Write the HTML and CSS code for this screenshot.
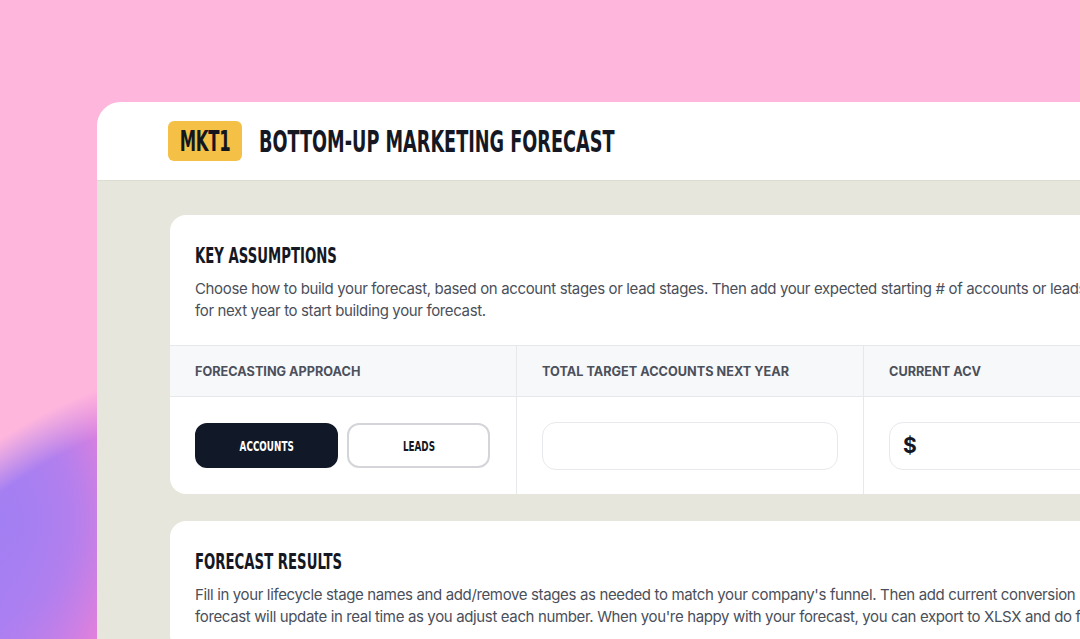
FILE: index.html
```html
<!DOCTYPE html>
<html lang="en">
<head>
<meta charset="utf-8">
<title>Bottom-up Marketing Forecast</title>
<link rel="stylesheet" href="styles.css">
</head>
<body>
<div class="window">
  <header class="topbar">
    <div class="logo"><span class="cond logo-text">MKT1</span></div>
    <h1 class="title"><span class="cond title-text">BOTTOM-UP MARKETING FORECAST</span></h1>
  </header>
  <main class="content">
    <section class="card">
      <div class="card-intro">
        <h2 class="card-title"><span class="cond heading-text">KEY ASSUMPTIONS</span></h2>
        <p class="card-text">Choose how to build your forecast, based on account stages or lead stages. Then add your expected starting # of accounts or leads<br>for next year to start building your forecast.</p>
      </div>
      <div class="grid">
        <div class="cell head">FORECASTING APPROACH</div>
        <div class="cell head">TOTAL TARGET ACCOUNTS NEXT YEAR</div>
        <div class="cell head">CURRENT ACV</div>
        <div class="cell body">
          <div class="toggle">
            <button class="btn active"><span class="cond btn-text">ACCOUNTS</span></button>
            <button class="btn"><span class="cond btn-text">LEADS</span></button>
          </div>
        </div>
        <div class="cell body"><div class="field"></div></div>
        <div class="cell body"><div class="field money"><span class="dollar">$</span></div></div>
      </div>
    </section>
    <section class="card">
      <div class="card-intro">
        <h2 class="card-title"><span class="cond heading-text">FORECAST RESULTS</span></h2>
        <p class="card-text">Fill in your lifecycle stage names and add/remove stages as needed to match your company's funnel. Then add current conversion rates. Your<br>forecast will update in real time as you adjust each number. When you're happy with your forecast, you can export to XLSX and do further analysis.</p>
      </div>
    </section>
  </main>
</div>
</body>
</html>
```
FILE: styles.css
```css
html, body {
  margin: 0;
  height: 100%;
  overflow: hidden;
}
body {
  width: 1080px;
  height: 639px;
  font-family: "Inter", "Liberation Sans", sans-serif;
  background:
    radial-gradient(circle 560px at 300px 900px, rgba(255,182,221,0) 0px, rgba(255,182,221,0) 505px, #ffb6dd 550px),
    radial-gradient(ellipse 140px 170px at 0px 520px, #a27ff3 0%, rgba(162,127,243,0.65) 55%, rgba(162,127,243,0) 100%),
    linear-gradient(90deg, #b67ff0 0px, #d07fe4 55px, #e680da 100px);
}
.window {
  margin: 102px 0 0 97px;
  width: 1100px;
  height: 700px;
  background: #e6e6dc;
  border-radius: 24px 0 0 0;
  overflow: hidden;
}
.cond {
  display: inline-block;
  font-family: "DejaVu Sans Condensed", "DejaVu Sans", sans-serif;
  font-weight: 700;
  white-space: nowrap;
}
.topbar {
  height: 78px;
  background: #ffffff;
  border-bottom: 1px solid #dcdcd3;
  display: flex;
  align-items: center;
  padding-left: 71px;
  gap: 17px;
}
.logo {
  width: 74px;
  height: 40px;
  background: #f5c046;
  border-radius: 6px;
  display: flex;
  align-items: center;
  justify-content: center;
  color: #14161f;
}
.logo-text {
  font-size: 29px;
  transform: scaleX(0.63);
  letter-spacing: -0.5px;
}
.title {
  margin: 0;
  color: #151823;
  font-weight: 700;
  line-height: 1;
}
.title-text {
  font-size: 30px;
  transform: scaleX(0.655);
  transform-origin: left center;
}
.content {
  padding: 34px 0 0 73px;
  display: flex;
  flex-direction: column;
  gap: 27px;
}
.card {
  background: #ffffff;
  border-radius: 16px 0 0 16px;
  width: 1000px;
  overflow: hidden;
}
.card-intro {
  padding: 27px 25px 23px;
}
.card-title {
  margin: 0 0 9px;
  color: #151823;
  line-height: 26px;
}
.heading-text {
  font-size: 22px;
  transform: scaleX(0.67);
  transform-origin: left center;
}
.card-text {
  margin: 0;
  font-size: 15px;
  line-height: 22px;
  color: #4a4f5a;
  white-space: nowrap;
  letter-spacing: -0.36px;
}
.grid {
  display: grid;
  grid-template-columns: 347px 347px 347px;
}
.cell {
  border-top: 1px solid #e6e8ec;
  border-right: 1px solid #e6e8ec;
  padding: 0 25px;
  display: flex;
  align-items: center;
}
.head {
  height: 50px;
  background: #f7f8fa;
  font-size: 12.7px;
  font-weight: 700;
  color: #4b505b;
}
.body {
  height: 97px;
}
.toggle {
  display: flex;
  gap: 9px;
}
.btn {
  width: 143px;
  height: 45px;
  border-radius: 12px;
  border: 2px solid #d4d5d8;
  background: #ffffff;
  color: #151823;
  padding: 0;
  display: flex;
  align-items: center;
  justify-content: center;
}
.btn.active {
  background: #111827;
  border-color: #111827;
  color: #ffffff;
}
.btn-text {
  font-size: 14px;
  transform: scaleX(0.7);
}
.field {
  width: 297px;
  height: 48px;
  border: 1px solid #e8e9ec;
  border-radius: 14px;
  display: flex;
  align-items: center;
  padding-left: 13px;
  box-sizing: border-box;
}
.dollar {
  font-size: 21px;
  font-weight: 700;
  color: #151823;
}
```
